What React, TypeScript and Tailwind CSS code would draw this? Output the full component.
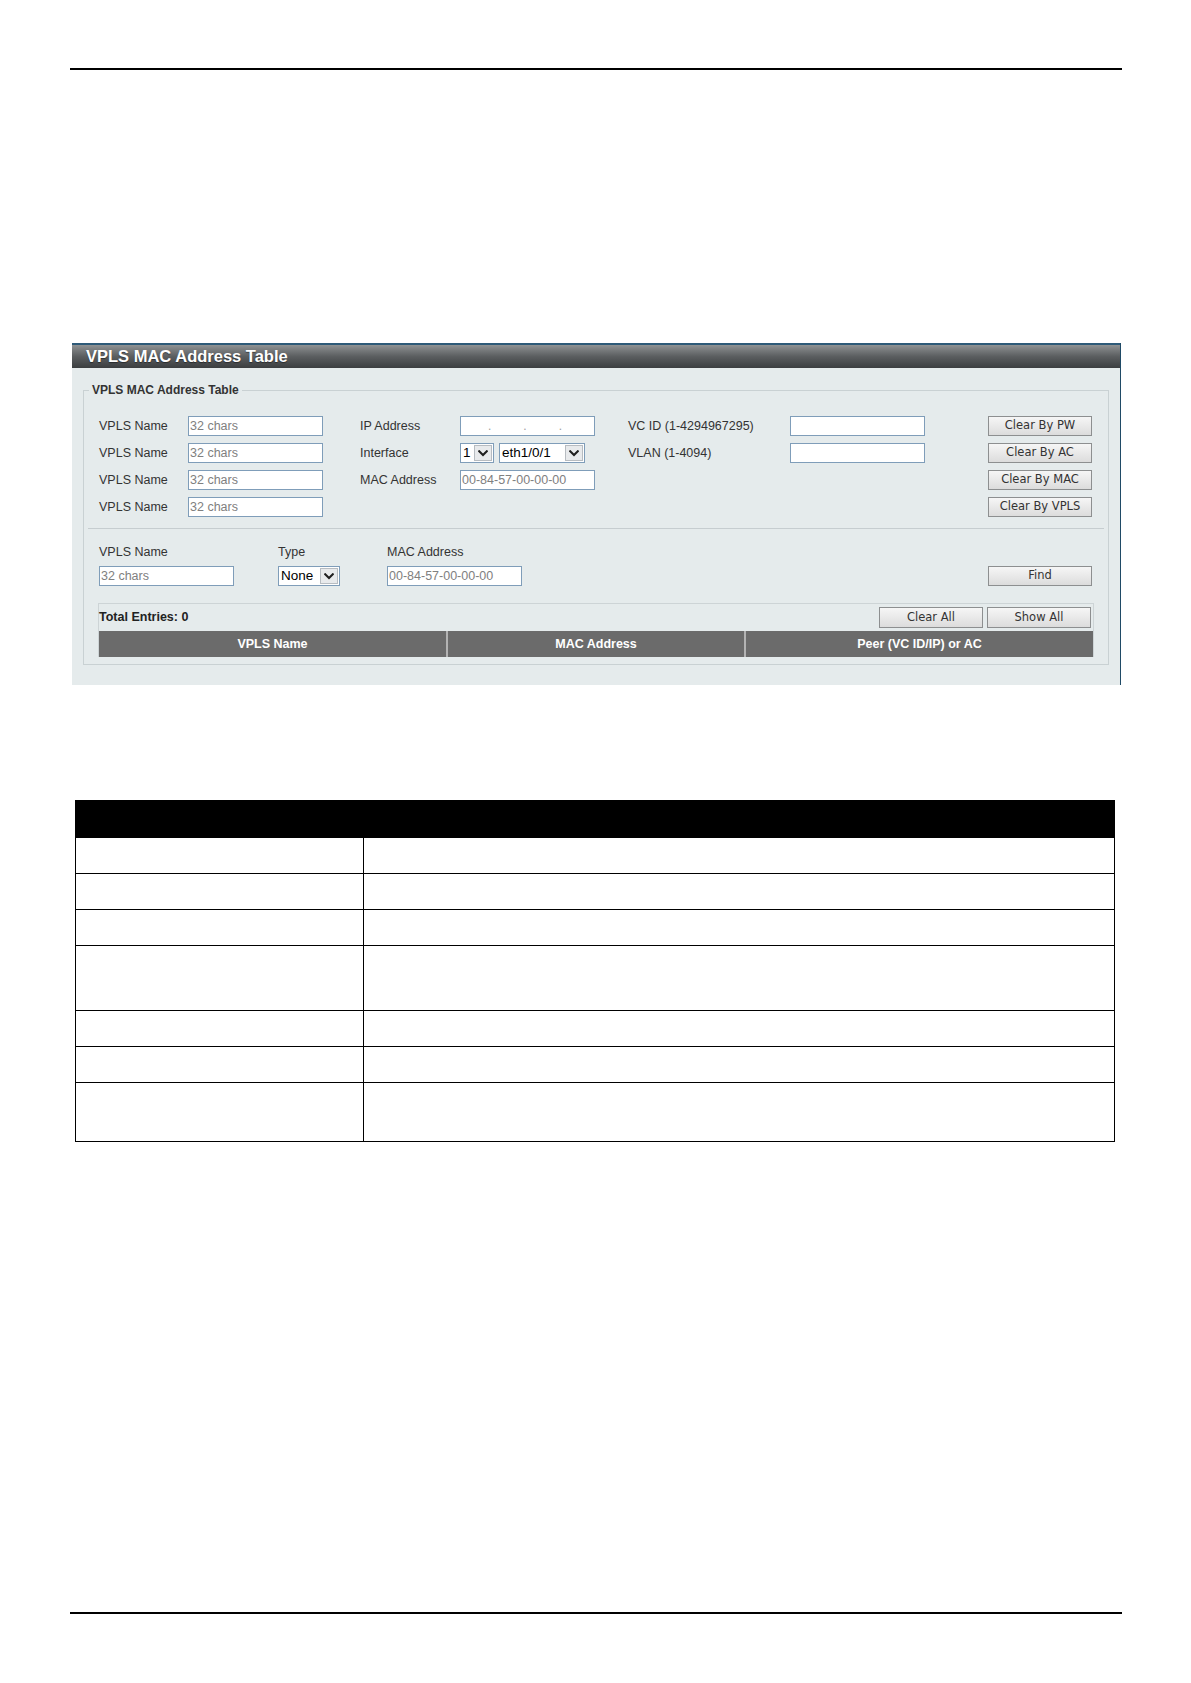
import type { ReactNode } from "react";

const label = "text-[12.5px] leading-[16px] text-[#333] whitespace-nowrap";

function Field({ placeholder, width = "w-[135px]" }: { placeholder?: string; width?: string }) {
  return (
    <input
      readOnly
      placeholder={placeholder}
      className={`h-[20px] ${width} border border-[#7f9db9] bg-white px-[1px] text-[12.5px] text-[#333] outline-none placeholder:text-[#808080] font-['Liberation_Sans',Arial,sans-serif]`}
    />
  );
}

function Chevron() {
  return (
    <svg width="10" height="7" viewBox="0 0 10 7" fill="none">
      <path d="M1.2 1.2 L5 5 L8.8 1.2" stroke="#1f1f1f" strokeWidth="2" strokeLinecap="square" />
    </svg>
  );
}

function Select({ value, width }: { value: string; width: string }) {
  return (
    <div className={`flex h-[20px] ${width} items-center border border-[#7f9db9] bg-white`}>
      <span className="flex-1 pl-[2px] text-[13.5px] leading-none text-black">{value}</span>
      <span className="mr-[1px] flex h-[16px] w-[18px] items-center justify-center border border-[#b7bcc1] bg-[#e8eaec]">
        <Chevron />
      </span>
    </div>
  );
}

function IpField() {
  return (
    <div className="flex h-[20px] w-[135px] items-center gap-[32px] border border-[#7f9db9] bg-white pl-[27px] text-[12px] leading-none text-[#a0a0a0]">
      <span>.</span>
      <span>.</span>
      <span>.</span>
    </div>
  );
}

function Btn({ children, className = "" }: { children: ReactNode; className?: string }) {
  return (
    <button
      className={`h-[20px] w-[104px] border border-[#8d8f90] bg-gradient-to-b from-[#f6f6f6] to-[#dcdcdc] text-[11.5px] leading-none text-[#333] font-['DejaVu_Sans',Verdana,sans-serif] ${className}`}
    >
      {children}
    </button>
  );
}

const rowHeights = ["h-[36px]", "h-[36px]", "h-[36px]", "h-[65px]", "h-[36px]", "h-[36px]", "h-[59px]"];

export default function App() {
  return (
    <div className="min-h-[1683px] w-[1191px] bg-white pt-[68px] font-['Liberation_Sans',Arial,sans-serif]">
      <div className="ml-[70px] h-[2px] w-[1052px] bg-black" />

      <section className="ml-[72px] mt-[273px] w-[1049px] border-r border-[#1f4a66] bg-[#e5ebec] pb-[20px]">
        <div className="h-[25px] border-t-2 border-[#2e5a78] bg-gradient-to-b from-[#8f9293] via-[#5b5e60] to-[#3b3e40] pl-[14px] text-[16.5px] font-bold leading-[23px] text-white [text-shadow:0_1px_1px_rgba(0,0,0,0.45)]">
          VPLS MAC Address Table
        </div>

        <div className="relative mx-[11px] mt-[22px] border border-[#c9d1d3] pb-[7px] pt-[25px]">
          <span className="absolute -top-[8px] left-[5px] bg-[#e5ebec] px-[3px] text-[12px] font-bold leading-[14px] text-[#333]">
            VPLS MAC Address Table
          </span>

          <div className="grid grid-cols-[89px_172px_100px_168px_162px_1fr_104px] items-center gap-y-[7px] pl-[15px] pr-[16px]">
            <span className={label}>VPLS Name</span>
            <Field placeholder="32 chars" />
            <span className={label}>IP Address</span>
            <IpField />
            <span className={label}>VC ID (1-4294967295)</span>
            <Field />
            <Btn>Clear By PW</Btn>

            <span className={label}>VPLS Name</span>
            <Field placeholder="32 chars" />
            <span className={label}>Interface</span>
            <div className="flex gap-[5px]">
              <Select value="1" width="w-[34px]" />
              <Select value="eth1/0/1" width="w-[86px]" />
            </div>
            <span className={label}>VLAN (1-4094)</span>
            <Field />
            <Btn>Clear By AC</Btn>

            <span className={label}>VPLS Name</span>
            <Field placeholder="32 chars" />
            <span className={label}>MAC Address</span>
            <Field placeholder="00-84-57-00-00-00" />
            <span />
            <span />
            <Btn>Clear By MAC</Btn>

            <span className={label}>VPLS Name</span>
            <Field placeholder="32 chars" />
            <span />
            <span />
            <span />
            <span />
            <Btn>Clear By VPLS</Btn>
          </div>

          <div className="mx-[4px] mt-[11px] h-px bg-[#c6cdd0]" />

          <div className="grid grid-cols-[179px_109px_1fr_104px] items-center gap-y-[6px] pl-[15px] pr-[16px] pt-[15px]">
            <span className={label}>VPLS Name</span>
            <span className={label}>Type</span>
            <span className={label}>MAC Address</span>
            <span />

            <Field placeholder="32 chars" />
            <Select value="None" width="w-[62px]" />
            <Field placeholder="00-84-57-00-00-00" />
            <Btn>Find</Btn>
          </div>

          <div className="mx-[14px] mt-[17px] border-x border-t border-[#cdd4d6]">
            <div className="flex h-[27px] items-center justify-between pr-[2px]">
              <span className="text-[12.5px] font-bold text-[#222]">Total Entries: 0</span>
              <div className="flex gap-[4px]">
                <Btn className="h-[21px]">Clear All</Btn>
                <Btn className="h-[21px]">Show All</Btn>
              </div>
            </div>
            <div className="grid h-[26px] grid-cols-[347px_298px_1fr] bg-[#6b6b6b] text-[12.5px] font-bold text-white">
              <div className="flex items-center justify-center">VPLS Name</div>
              <div className="flex items-center justify-center border-l-2 border-[#b3b3b3]">MAC Address</div>
              <div className="flex items-center justify-center border-l-2 border-[#b3b3b3]">Peer (VC ID/IP) or AC</div>
            </div>
          </div>
        </div>
      </section>

      <div className="ml-[75px] mt-[115px] w-[1040px] border border-black">
        <div className="h-[36px] bg-black" />
        {rowHeights.map((h, i) => (
          <div key={i} className={`grid ${h} grid-cols-[288px_1fr] border-t border-black`}>
            <div className="border-r border-black" />
            <div />
          </div>
        ))}
      </div>

      <div className="ml-[70px] mt-[470px] h-[2px] w-[1052px] bg-black" />
    </div>
  );
}
